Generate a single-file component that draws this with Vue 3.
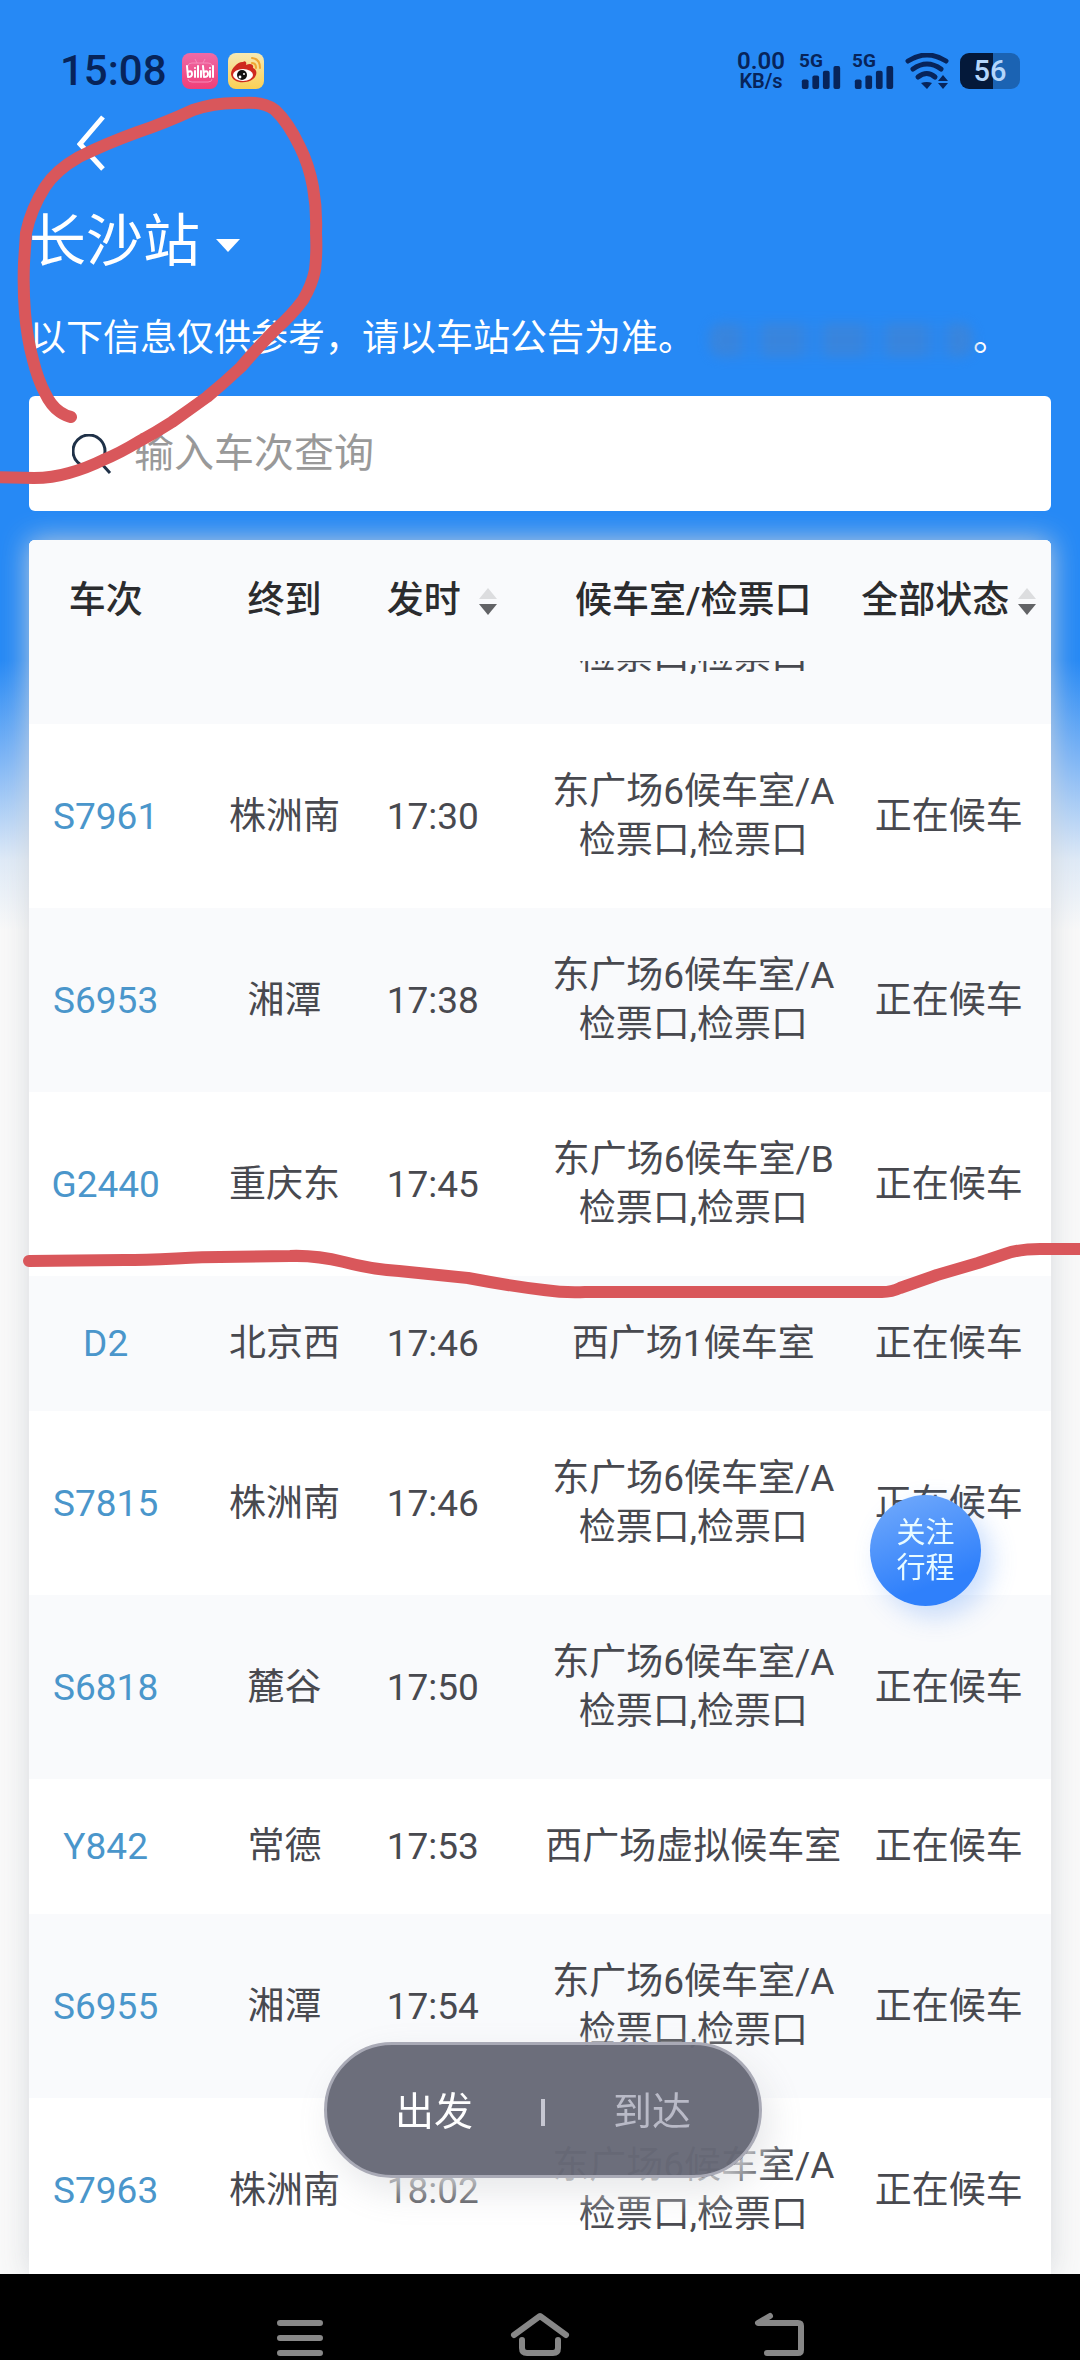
<script setup>
import { ref, onMounted } from 'vue'

const east = (gate) => ({ room: `东广场6候车室/${gate}检票口,检票口` })
const trains = [
  { no: 'S7961', to: '株洲南', time: '17:30', ...east('A'), status: '正在候车' },
  { no: 'S6953', to: '湘潭', time: '17:38', ...east('A'), status: '正在候车' },
  { no: 'G2440', to: '重庆东', time: '17:45', ...east('B'), status: '正在候车' },
  { no: 'D2', to: '北京西', time: '17:46', room: '西广场1候车室', status: '正在候车' },
  { no: 'S7815', to: '株洲南', time: '17:46', ...east('A'), status: '正在候车' },
  { no: 'S6818', to: '麓谷', time: '17:50', ...east('A'), status: '正在候车' },
  { no: 'Y842', to: '常德', time: '17:53', room: '西广场虚拟候车室', status: '正在候车' },
  { no: 'S6955', to: '湘潭', time: '17:54', ...east('A'), status: '正在候车' },
  { no: 'S7963', to: '株洲南', time: '18:02', ...east('A'), status: '正在候车' },
]

const keyword = ref('')
const mode = ref('depart')
const list = ref(null)
const head = ref(null)

// Open the list one header-height down, the sticky header stays on top.
onMounted(() => {
  list.value.scrollTop = head.value.offsetHeight
})
</script>

<template>
  <div class="screen">
    <div class="status-bar">
      <span class="clock">15:08</span>
      <svg class="app-icon" viewBox="0 0 36 36" aria-hidden="true">
        <defs>
          <linearGradient id="bili" x1="0" y1="0" x2="0" y2="1">
            <stop offset="0" stop-color="#ee6ba6" />
            <stop offset="1" stop-color="#f03e78" />
          </linearGradient>
        </defs>
        <rect width="36" height="36" rx="8" fill="url(#bili)" />
        <path d="M13 6l2 4M23 6l-2 4M6 13q0-3 4-3h16q4 0 4 3M6 26q0 3 4 3h16q4 0 4-3" fill="none" stroke="#f58bb8" stroke-width="1" />
        <g fill="none" stroke="#fff" stroke-width="2" stroke-linecap="round">
          <path d="M5 13l1 11M6 19q4-2 4 2q0 3-4 3M13 18v6M13 15v0M16 13v11M19 18v6" />
          <path d="M21 13l1 11M22 19q4-2 4 2q0 3-4 3M28 18v6M28 15v0M31 13v11" />
        </g>
      </svg>
      <svg class="app-icon" viewBox="0 0 36 36" aria-hidden="true">
        <defs>
          <linearGradient id="weibo" x1="0" y1="0" x2="0" y2="1">
            <stop offset="0" stop-color="#f6e9b4" />
            <stop offset="1" stop-color="#fbd054" />
          </linearGradient>
        </defs>
        <rect width="36" height="36" rx="8" fill="url(#weibo)" />
        <path d="M3 21C3 15 11 8 15 9c2-2 4 0 3 3c4-2 8-1 7 3c5 2 4 8 0 11c-6 5-21 5-22-5z" fill="#cf2a1e" />
        <ellipse cx="15" cy="22" rx="10" ry="6" fill="#fff" />
        <circle cx="14" cy="22" r="5" fill="#111" />
        <circle cx="12" cy="24" r="1.400" fill="#fff" />
        <circle cx="16" cy="21" r="1" fill="#fff" />
        <path d="M24 5q8 1 8 10M24 10q4 0 4 5" fill="none" stroke="#f0a632" stroke-width="2" stroke-linecap="round" />
      </svg>
      <div class="net-speed"><b>0.00</b><small>KB/s</small></div>
      <div v-for="n in 2" :key="n" class="signal">
        <span>5G</span>
        <svg viewBox="0 0 40 24" aria-hidden="true">
          <rect x="0" y="14" width="7" height="10" rx="2" />
          <rect x="11" y="10" width="7" height="14" rx="2" />
          <rect x="22" y="5" width="7" height="19" rx="2" />
          <rect x="33" y="0" width="7" height="24" rx="2" />
        </svg>
      </div>
      <svg class="wifi" viewBox="0 0 44 36" aria-hidden="true">
        <g fill="none" stroke="#07245a" stroke-width="5" stroke-linecap="round">
          <path d="M3 8Q22-4 41 8" />
          <path d="M8 16Q22 6 36 16" />
          <path d="M13 24Q22 17 30 24" />
        </g>
        <path d="M16 30q6-2 11 0l-5 6zM38 22l5 6H33zM33 30h10l-5 6z" fill="#07245a" />
      </svg>
      <div class="battery">56</div>
    </div>

    <header class="top">
      <button class="back" type="button" aria-label="返回">
        <svg viewBox="0 0 28 56" aria-hidden="true"><path d="M26 2L3 29L26 54" fill="none" stroke="#fff" stroke-width="5" /></svg>
      </button>
      <h1><button class="station" type="button">长沙站<span class="caret"></span></button></h1>
      <p class="notice">以下信息仅供参考，请以车站公告为准。<span class="smudge"></span>。</p>
      <label class="search">
        <svg viewBox="0 0 40 40" aria-hidden="true"><circle cx="17" cy="17" r="16" /><path d="M28 28l10 11" /></svg>
        <input v-model="keyword" type="text" placeholder="输入车次查询" aria-label="输入车次查询" />
      </label>
    </header>

    <main class="card">
      <div ref="list" class="scroller">
        <table>
          <colgroup>
            <col class="c-no" /><col class="c-to" /><col class="c-time" /><col class="c-room" /><col class="c-status" />
          </colgroup>
          <thead ref="head">
            <tr>
              <th>车次</th>
              <th>终到</th>
              <th class="time"><button type="button" class="sort wide">发时<i></i></button></th>
              <th>候车室/检票口</th>
              <th><button type="button" class="sort">全部状态<i></i></button></th>
            </tr>
          </thead>
          <tbody>
            <tr class="passed">
              <td></td>
              <td></td>
              <td></td>
              <td>检票口,检票口</td>
              <td></td>
            </tr>
            <tr v-for="t in trains" :key="t.no">
              <td><a href="#">{{ t.no }}</a></td>
              <td>{{ t.to }}</td>
              <td class="time">{{ t.time }}</td>
              <td>{{ t.room }}</td>
              <td>{{ t.status }}</td>
            </tr>
          </tbody>
        </table>
      </div>
      <button class="follow" type="button">关注<br />行程</button>
      <div class="switch">
        <button type="button" :class="{ on: mode === 'depart' }" @click="mode = 'depart'">出发</button>
        <span class="bar"></span>
        <button type="button" :class="{ on: mode === 'arrive' }" @click="mode = 'arrive'">到达</button>
      </div>
    </main>

    <nav class="system-nav">
      <button type="button" aria-label="菜单">
        <svg viewBox="0 0 60 48"><path d="M10 11h40M10 26h40M10 41h40" /></svg>
      </button>
      <button type="button" aria-label="主页">
        <svg viewBox="0 0 60 48"><path d="M4 23L30 4L56 23M12 28v8q0 5 5 5h26q5 0 5-5v-8" /></svg>
      </button>
      <button type="button" aria-label="返回">
        <svg viewBox="0 0 60 48"><path d="M20 4L8 11H48q3 0 3 3v24q0 3-3 3H17" /></svg>
      </button>
    </nav>

    <svg class="marks" viewBox="0 0 1080 2360" aria-hidden="true">
      <path d="M71 417Q66 416 60 412Q51 406 45 393Q38 380 33 360Q27 338 25 313Q23 288 24 263Q25 248 26 233Q31 209 45 187Q56 170 79 157Q105 144 138 132Q165 123 193 110Q216 102 241 103Q263 101 275 110Q288 122 300 147Q309 165 313 187Q317 210 316 233Q317 252 315 270Q312 285 303 300Q292 315 275 330Q258 347 241 367Q224 383 207 397Q189 410 172 422Q155 433 138 442Q120 453 103 460Q87 468 69 473Q52 478 34 478L-8 477" />
      <path d="M29 1261L124 1260C160 1260 190 1257 220 1257L290 1256Q315 1255 344 1262Q370 1269 399 1271L468 1278Q510 1286 544 1290Q565 1293 585 1292H882Q892 1292 900 1288L937 1275L978 1263L1005 1254Q1019 1249 1040 1249H1088" />
    </svg>
  </div>
</template>

<style>
body {
  margin: 0;
}
</style>

<style scoped>
.screen {
  position: relative;
  display: flex;
  flex-direction: column;
  height: 100vh;
  overflow: hidden;
  font-family: Roboto, 'Noto Sans CJK SC', sans-serif;
  font-size: 37px;
  line-height: 48px;
  color: #48494f;
  background: linear-gradient(#2689f5 660px, #7fb6f6 760px, #dfeaf7 860px, #f9f9f9 930px);
}
button {
  padding: 0;
  border: 0;
  background: none;
  font: inherit;
  color: inherit;
}

/* status bar */
.status-bar {
  display: flex;
  align-items: center;
  height: 36px;
  padding: 53px 60px 0;
  color: #07245a;
}
.clock {
  margin-right: 15px;
  font-size: 42px;
  font-weight: 500;
}
.app-icon {
  width: 36px;
  height: 36px;
  margin-right: 10px;
}
.net-speed {
  display: flex;
  flex-direction: column;
  align-items: center;
  margin: 0 14px 0 auto;
  font-size: 24px;
  line-height: 20px;
}
.net-speed b {
  font-weight: 600;
}
.net-speed small {
  font-size: 20px;
  font-weight: 600;
}
.signal {
  display: flex;
  flex-direction: column;
  width: 42px;
  height: 36px;
  margin-right: 11px;
  font-size: 19px;
  font-weight: 700;
  line-height: 16px;
}
.signal svg {
  width: 40px;
  height: 24px;
  margin: -3px 0 0 2px;
  fill: #07245a;
}
.wifi {
  width: 44px;
  height: 36px;
  margin-right: 11px;
}
.battery {
  width: 60px;
  height: 36px;
  border-radius: 9px;
  background: linear-gradient(90deg, #04193a 55%, #1b63b3 55%);
  color: #b4d6fb;
  font-size: 29px;
  font-weight: 500;
  line-height: 37px;
  text-align: center;
}

/* page header */
.top {
  display: flex;
  flex-direction: column;
  align-items: flex-start;
  padding: 26px 29px 0;
  color: #fff;
}
.back {
  margin-left: 48px;
}
.back svg {
  display: block;
  width: 28px;
  height: 56px;
}
h1 {
  margin: 39px 0 0;
  font-size: 57px;
  font-weight: 400;
  line-height: 64px;
}
.station {
  display: flex;
  align-items: center;
}
.caret {
  margin: 6px 0 0 16px;
  border: 12px solid transparent;
  border-top: 13px solid #fff;
  border-bottom: 0;
}
.notice {
  display: flex;
  margin: 41px 0 31px;
  white-space: nowrap;
}
.smudge {
  width: 264px;
  height: 34px;
  margin: 8px 0 8px 14px;
  border-radius: 12px;
  background: repeating-linear-gradient(90deg, #3d84d8 0 26px, #2b87ee 40px 48px, #4584cf 62px);
  filter: blur(6px);
  opacity: 0.8;
}
.search {
  display: flex;
  align-items: center;
  align-self: stretch;
  gap: 20px;
  height: 115px;
  padding: 0 43px;
  border-radius: 6px;
  background: #fff;
}
.search svg {
  flex: none;
  width: 40px;
  height: 40px;
  fill: none;
  stroke: #1f3148;
  stroke-width: 3;
}
.search input {
  flex: 1;
  min-width: 0;
  border: 0;
  outline: 0;
  background: none;
  font: inherit;
  font-size: 40px;
  color: #333;
}
.search input::placeholder {
  color: #999;
}

/* timetable */
.card {
  position: relative;
  display: flex;
  flex: 1;
  min-height: 0;
  margin: 29px 29px 0;
  border-radius: 6px 6px 0 0;
  background: #fff;
  box-shadow: 0 0 28px rgba(210, 213, 217, 0.9);
}
.scroller {
  flex: 1;
  overflow-y: auto;
  border-radius: 6px 6px 0 0;
  scrollbar-width: none;
}
table {
  width: 100%;
  border-collapse: collapse;
  table-layout: fixed;
}
.c-no {
  width: 15%;
}
.c-to {
  width: 20%;
}
.c-time {
  width: 15%;
}
.c-room {
  width: 30%;
}
.c-status {
  width: 20%;
}
thead {
  position: sticky;
  top: 0;
}
th {
  padding: 37px 0 36px;
  background: #f9fafc;
  color: #2b2c2e;
  font-weight: 500;
}
td {
  padding: 43px 0;
  line-height: 49px;
  text-align: center;
}
tbody tr:nth-child(odd) {
  background: #f9fafc;
}
.passed td {
  height: 98px;
  vertical-align: bottom;
}
.time {
  text-align: left;
}
a {
  color: #4a96cb;
  text-decoration: none;
}
.sort {
  display: inline-flex;
  align-items: center;
  gap: 9px;
  vertical-align: top;
}
.wide {
  gap: 18px;
}
.sort i {
  display: flex;
  flex-direction: column;
  gap: 5px;
}
.sort i::before,
.sort i::after {
  content: '';
  border: 9px solid transparent;
}
.sort i::before {
  border-top: 0;
  border-bottom: 11px solid #dcdddf;
}
.sort i::after {
  border-bottom: 0;
  border-top: 11px solid #626366;
}

/* floating controls */
.follow {
  position: absolute;
  right: 70px;
  bottom: 668px;
  width: 111px;
  height: 111px;
  border-radius: 50%;
  background: linear-gradient(160deg, #74abfb, #2f80fb 75%);
  box-shadow: 10px 10px 26px rgba(80, 145, 250, 0.3);
  color: #e8fbff;
  font-size: 29px;
  line-height: 35px;
}
.switch {
  position: absolute;
  left: 50%;
  bottom: 96px;
  display: flex;
  align-items: center;
  justify-content: space-evenly;
  box-sizing: border-box;
  width: 438px;
  height: 136px;
  margin-left: -216px;
  padding-top: 4px;
  border: 3px solid #a9aab6;
  border-radius: 68px;
  background: rgba(103, 105, 119, 0.97);
  box-shadow: 8px 14px 34px rgba(228, 229, 232, 0.9);
  color: #b9bac7;
  font-size: 39px;
}
.switch .on {
  color: #fff;
}
.bar {
  width: 4px;
  height: 27px;
  background: #c6c7d2;
}

/* system navigation */
.system-nav {
  position: relative;
  display: flex;
  justify-content: center;
  gap: 180px;
  height: 49px;
  padding-top: 37px;
  background: #000;
}
.system-nav svg {
  display: block;
  width: 60px;
  height: 48px;
  fill: none;
  stroke: #878787;
  stroke-width: 6;
  stroke-linecap: round;
  stroke-linejoin: round;
}

/* pen marks over the page */
.marks {
  position: absolute;
  top: 0;
  left: 0;
  width: 100%;
  fill: none;
  stroke: #d9575b;
  stroke-width: 12;
  stroke-linecap: round;
  stroke-linejoin: round;
  pointer-events: none;
}
</style>
